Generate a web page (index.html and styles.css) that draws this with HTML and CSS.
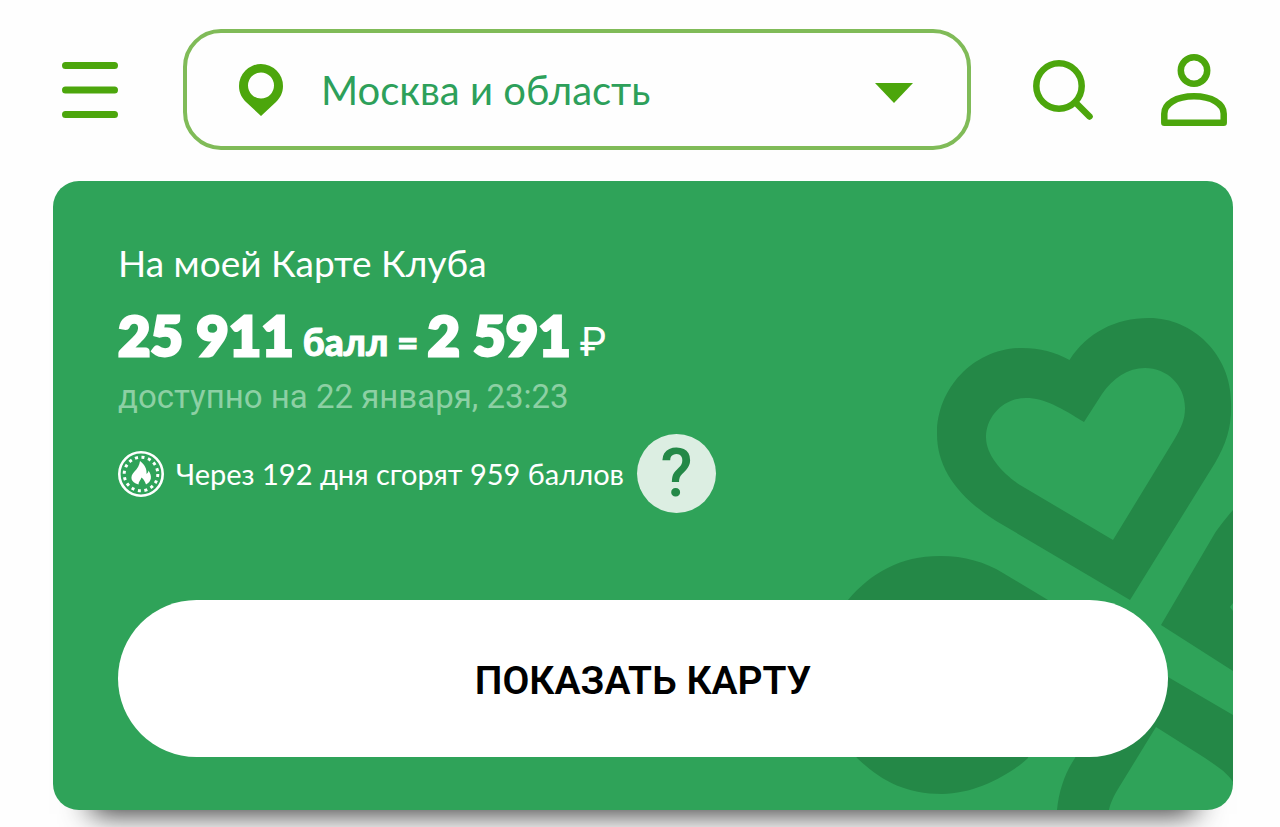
FILE: index.html
```html
<!DOCTYPE html>
<html lang="ru">

<head>
    <meta charset="UTF-8">
    <meta name="viewport" content="width=device-width, initial-scale=1.0">
    <title>Карта Клуба</title>
    <link rel="stylesheet" href="styles.css">
</head>

<body>
    <header class="header">
        <button type="button" class="icon-btn" aria-label="Меню">
            <svg width="56" height="56" viewBox="0 0 56 56" stroke="currentColor" stroke-width="7" stroke-linecap="round">
                <path d="M3.5 3.5h49M3.5 28h49M3.5 52.5h49" />
            </svg>
        </button>
        <div class="region">
            <svg width="44" height="52" viewBox="0 0 44 52">
                <path fill="currentColor" fill-rule="evenodd" d="M22 0a22 22 0 0 1 22 22c0 7-3 12-7 16L22 52 7 38C3 34 0 29 0 22A22 22 0 0 1 22 0zm0 8.500a13 13 0 1 0 0 26 13 13 0 0 0 0-26z" />
            </svg>
            <select class="region-select" name="region" aria-label="Регион">
                <option>Москва и область</option>
            </select>
            <svg width="38" height="26" viewBox="0 0 38 26">
                <path fill="currentColor" d="M0 6h38L19 26z" />
            </svg>
        </div>
        <button type="button" class="icon-btn" aria-label="Поиск">
            <svg width="62" height="62" viewBox="0 0 62 62" fill="none" stroke="currentColor" stroke-width="6.500" stroke-linecap="round">
                <circle cx="27" cy="27" r="22.700" />
                <path d="M43.500 43.500 57.500 57.500" />
            </svg>
        </button>
        <button type="button" class="icon-btn" aria-label="Профиль">
            <svg width="66" height="72" viewBox="0 0 66 72" fill="none" stroke="currentColor" stroke-width="6.500" stroke-linejoin="round">
                <circle cx="33" cy="16.500" r="13.200" />
                <path d="M3.300 68.700v-9C3.300 50 15 42.300 33 42.300S62.700 50 62.700 59.700v9z" />
            </svg>
        </button>
    </header>

    <main class="card">
        <svg class="card-art" width="413" height="510" viewBox="820 300 413 510" fill="currentColor" aria-hidden="true">
            <path fill-rule="evenodd" d="M1069.500 360C1055 352 1040 348 1022 348c-47 0-85 39-85 86 0 36 23 66 66 91l127 75 85-137c12-20 17-38 16-61 0-47-38-84-82-84-34 0-62 15-79.500 42zM1084 422C1061 408 1045 398 1026 398c-23 0-40 19-40 39 0 18 16 36 34 48l93 55 61-100c7-12 11-20 11-32 0-23-18-40-40-40-17 0-32 10-43 26z" />
            <path d="M1048 600 1003 573C985 562 965 556 940 556c-40 0-69 17-92 44-24 48-24 110 9 158 23 22 48 36 85 36 33 0 68-19 86-36z" />
            <path d="M1233 510c-8 9-13 16-18 23l-54 92 72 46v-60l-3-4 3-4z" />
            <path d="M1120 650 1168 677 1233 715V782C1227 772 1215 765 1205 758L1156 727 1118 789C1112 799 1110 805 1109 810H1057C1059 790 1065 773 1075 758z" />
        </svg>

        <h1 class="card-title">На моей Карте Клуба</h1>
        <p class="balance"><b>25 911</b> <strong>балл =</strong> <b>2 591</b> <span>₽</span></p>
        <p class="date">доступно на 22 января, 23:23</p>
        <div class="burn">
            <svg width="46" height="46" viewBox="0 0 46 46" fill="none" stroke="currentColor">
                <circle cx="23" cy="23" r="21.700" stroke-width="2.600" />
                <circle cx="23" cy="23" r="16.800" stroke-width="3" stroke-dasharray="3 3.597" />
                <path stroke="none" fill="currentColor" d="M22 10c5 4 7 8 6.500 13 1-1 2-2 2-3.500 4 6 3 11-2.500 14-1-3-2-5-4.500-7-1 3-3 4-3 7-8-2-9-8-4-13 3-3 5-6 5.500-10.500z" />
            </svg>
            <span class="burn-text">Через 192 дня сгорят 959 баллов</span>
            <button type="button" class="help" aria-label="Подробнее о баллах">?</button>
        </div>
        <button type="button" class="show-card">ПОКАЗАТЬ КАРТУ</button>
    </main>
</body>

</html>
```
FILE: styles.css
```css
* {
    box-sizing: border-box;
}

body {
    margin: 0;
    padding: 29px 47px 17px 53px;
    background-color: #fefefe;
    font-family: Roboto, Arial, sans-serif;
    color: #fff;
}

button {
    border: none;
    padding: 0;
    font-family: inherit;
    cursor: pointer;
}

svg {
    display: block;
    flex: none;
}

.header {
    display: flex;
    align-items: center;
    margin-bottom: 31px;
    padding: 0 6px 0 9px;
    color: #4ca60c;
}

.icon-btn {
    background: none;
    color: inherit;
}

.region {
    flex: 1;
    display: flex;
    align-items: center;
    height: 121px;
    margin: 0 61px 0 65px;
    padding: 0 54px 0 52px;
    border: 4px solid #80bb58;
    border-radius: 38px;
}

.region-select {
    flex: 1;
    min-width: 0;
    height: 100%;
    margin-left: 38px;
    padding: 0;
    border: none;
    appearance: none;
    background: none;
    font-family: Lato, sans-serif;
    font-size: 40px;
    color: #2da05a;
}

.icon-btn + .icon-btn {
    margin-left: 67px;
}

.card {
    position: relative;
    padding: 57px 65px 53px;
    border-radius: 26px;
    background-color: #2fa359;
    box-shadow: 0 42px 28px -38px rgba(0, 0, 0, 0.8);
}

.card-art {
    position: absolute;
    right: 0;
    bottom: 0;
    border-radius: 0 0 26px 0;
    color: #248847;
}

.card-title {
    margin: 0;
    font-family: Lato, sans-serif;
    font-size: 37px;
    font-weight: 400;
    line-height: 50px;
}

.balance {
    display: flex;
    align-items: baseline;
    gap: 9px;
    height: 86px;
    margin: 0;
    padding-top: 8px;
    line-height: 78px;
    white-space: nowrap;
}

.balance b {
    font-family: Lato, sans-serif;
    font-size: 56px;
    font-weight: 900;
    -webkit-text-stroke: 3px #fff;
}

.balance strong {
    font-family: Lato, sans-serif;
    font-size: 37px;
    font-weight: 900;
    -webkit-text-stroke: 1px #fff;
}

.balance span {
    font-size: 40px;
}

.date {
    margin: 0;
    font-size: 33px;
    line-height: 46px;
    color: #8dd0a4;
}

.burn {
    display: flex;
    align-items: center;
    margin-top: 14px;
}

.burn-text {
    margin: 0 13px 0 12px;
    font-family: Lato, sans-serif;
    font-size: 29px;
}

.help {
    width: 79px;
    height: 79px;
    border-radius: 50%;
    background-color: #dceee2;
    font-size: 66px;
    font-weight: 500;
    line-height: 79px;
    color: #248847;
}

/* the button lies over the art */
.show-card {
    position: relative;
    display: block;
    width: 100%;
    height: 157px;
    margin-top: 87px;
    padding-top: 5px;
    border-radius: 79px;
    background-color: #fff;
    font-size: 39px;
    font-weight: 600;
    color: #000;
}
```
